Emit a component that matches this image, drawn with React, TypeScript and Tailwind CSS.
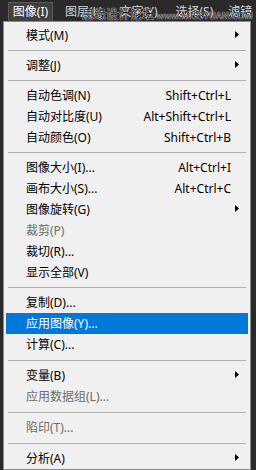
import React from 'react';

type Item =
  | { sep: true; h: string }
  | { sep?: false; label: string; key?: string; sub?: boolean; off?: boolean; active?: boolean };

const items: Item[] = [
  { label: '模式(M)', sub: true },
  { sep: true, h: 'h-[9px]' },
  { label: '调整(J)', sub: true },
  { sep: true, h: 'h-[9px]' },
  { label: '自动色调(N)', key: 'Shift+Ctrl+L' },
  { label: '自动对比度(U)', key: 'Alt+Shift+Ctrl+L' },
  { label: '自动颜色(O)', key: 'Shift+Ctrl+B' },
  { sep: true, h: 'h-[9px]' },
  { label: '图像大小(I)...', key: 'Alt+Ctrl+I' },
  { label: '画布大小(S)...', key: 'Alt+Ctrl+C' },
  { label: '图像旋转(G)', sub: true },
  { label: '裁剪(P)', off: true },
  { label: '裁切(R)...' },
  { label: '显示全部(V)' },
  { sep: true, h: 'h-[9px]' },
  { label: '复制(D)...' },
  { label: '应用图像(Y)...', active: true },
  { label: '计算(C)...' },
  { sep: true, h: 'h-[10px]' },
  { label: '变量(B)', sub: true },
  { label: '应用数据组(L)...', off: true },
  { sep: true, h: 'h-[10px]' },
  { label: '陷印(T)...', off: true },
  { sep: true, h: 'h-[10px]' },
  { label: '分析(A)', sub: true },
];

function Arrow({ white }: { white?: boolean }) {
  return (
    <svg width="4" height="7" viewBox="0 0 4 7" className="absolute right-[9px] top-[6px]">
      <path d="M0 0 L4 3.5 L0 7 Z" fill={white ? '#fff' : '#000'} />
    </svg>
  );
}

export default function App() {
  return (
    <div
      className="w-[256px] h-[470px] bg-[#2a2a2a] overflow-hidden relative"
      style={{ fontFamily: '"Noto Sans", "Noto Sans CJK SC", sans-serif' }}
    >
      {/* top menu bar */}
      <div className="h-[21px] flex items-end text-[12px] text-[#d8d8d8] leading-none">
        <div className="ml-[8px] h-[19px] w-[45px] bg-[#404040] border-t border-x border-[#5a5a5a] flex items-center justify-center text-white">
          图像(I)
        </div>
        <div className="ml-[12px] h-[19px] flex items-center">图层(L)</div>
        <div className="ml-[17px] h-[19px] flex items-center">文字(Y)</div>
        <div className="ml-[18px] h-[19px] flex items-center">选择(S)</div>
        <div className="ml-[15px] h-[19px] flex items-center whitespace-nowrap">滤镜</div>
      </div>
      {/* watermark */}
      <div className="absolute left-[82px] top-[9px] flex items-baseline gap-[3px] text-[#1a1a1a] leading-none [text-shadow:0_0_1px_#fff,0_0_1px_#fff]">
        <span className="text-[12px]">思缘设计论坛</span>
        <span className="text-[9px] tracking-[0.3px]">www.MISSYUAN.COM</span>
      </div>

      {/* dropdown panel */}
      <div className="ml-[3px] w-[248px] bg-[#f0f0f0] border border-[#8a8a8a] pt-[3px] px-[2px] text-[12px] leading-none">
        {items.map((it, i) =>
          it.sep ? (
            <div key={i} className={`${it.h} flex items-center px-[2px]`}>
              <div className="h-px w-full bg-[#b0b0b0]" />
            </div>
          ) : (
            <div
              key={i}
              className={`relative h-[21px] flex items-center pl-[20px] pr-[17px] ${
                it.active ? 'bg-[#0078d7] text-white' : it.off ? 'text-[#6d6d6d]' : 'text-black'
              }`}
            >
              <span className="flex-1 whitespace-nowrap">{it.label}</span>
              {it.key && <span className="whitespace-nowrap">{it.key}</span>}
              {it.sub && <Arrow white={it.active} />}
            </div>
          )
        )}
      </div>
    </div>
  );
}
